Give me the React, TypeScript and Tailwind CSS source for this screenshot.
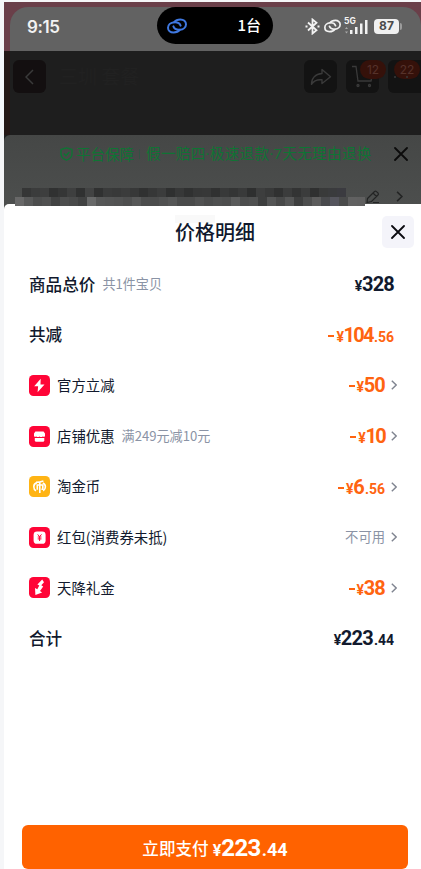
import { ReactNode } from "react"
import clsx from "clsx"

interface IPrice {
    value: string
    cents?: string
    minus?: boolean
}

interface IRow {
    label: string
    icon?: ReactNode
    note?: string
    price?: IPrice
    status?: string
    isLink?: boolean
}

const mosaicTop = [
    "#353636", "#3b3c3c", "#3d3e3e", "#303131", "#353636", "#3e3f3f", "#303131", "#424343", "#303131",
    "#3a3b3b", "#383939", "#3b3c3c", "#373838", "#303131", "#363737", "#3b3c3c", "#2f3030", "#373838",
    "#303131", "#363737", "#373838", "#303131", "#383939", "#343535", "#393a3a", "#2e2f2f", "#3d3e3e",
    "#383939", "#303131", "#3b3c3c", "#333434", "#3b3c3c", "#2f3030", "#393a3a", "#3a3b3d", "#3b3b40",
]
const mosaicBottom = [
    "#686868", "#585959", "#4c4d4d", "#505151", "#414242", "#4d4e4e", "#494a4a", "#414242", "#686969",
    "#565757", "#545555", "#525353", "#4e4f4f", "#575858", "#4c4d4d", "#4b4c4c", "#505151", "#555656",
    "#4a4b4b", "#4a4b4b", "#515252", "#4b4c4c", "#4f5050", "#4d4e4e", "#5a5b5b", "#4c4d4d", "#4f5050",
    "#3d3e3e", "#545555", "#484949", "#555656", "#3e3f3f", "#4d4e4e", "#5c5c5c", "#494a4d", "#55555d",
    "#4a4b4b", "#616161", "#606060",
]

const Mosaic = ({ colors, className }: { colors: string[]; className: string }) => (
    <div className={clsx("flex h-[9px] overflow-hidden", className)}>
        {colors.map((color, i) => (
            <div key={i} className="h-full w-[9px] shrink-0" style={{ backgroundColor: color }} />
        ))}
    </div>
)

const ChainIcon = ({ className }: { className: string }) => (
    <svg viewBox="0 0 20 16" fill="none" stroke="currentColor" strokeWidth="2" strokeLinecap="round" className={className}>
        <path d="M13.6 7.6C12.8 5.2 10.2 4 7.2 4.2 3.6 4.5 1 6.9 1 9.8c0 2.8 2.3 4.8 5.6 4.8 2.7 0 5-1.1 6.3-2.9" />
        <path d="M6.4 8.4C7.2 10.8 9.8 12 12.8 11.8 16.4 11.5 19 9.1 19 6.2c0-2.8-2.3-4.8-5.6-4.8-2.7 0-5 1.1-6.3 2.9" />
    </svg>
)

const CloseIcon = ({ className }: { className: string }) => (
    <svg viewBox="0 0 14 14" fill="none" stroke="currentColor" strokeWidth="1.8" strokeLinecap="round" className={className}>
        <path d="M1 1l12 12M13 1L1 13" />
    </svg>
)

const Chevron = ({ className }: { className?: string }) => (
    <svg viewBox="0 0 6 10" fill="none" stroke="currentColor" strokeWidth="1.4" className={className}>
        <path d="M.8 .8L5.2 5 .8 9.2" />
    </svg>
)

const Badge = ({ yellow, children }: { yellow?: boolean; children: ReactNode }) => (
    <svg viewBox="0 0 21 21" className="mr-[7px] h-[21px] w-[21px] shrink-0">
        <rect width="21" height="21" rx="4.5" fill={yellow ? "#ffb414" : "#ff0537"} />
        {children}
    </svg>
)

const BoltBadge = () => (
    <Badge>
        <path d="M11.7 3.8L5.2 11.3H9.1L8.6 17.2 15.5 9.4H11.5Z" fill="#fff" />
    </Badge>
)

const ShopBadge = () => (
    <Badge>
        <path d="M6.4 5.5H14.5L16 7.5V10.2Q15 11.3 13.7 10.5 12.1 11.5 10.5 10.5 8.9 11.5 7.3 10.5 6 11.3 5 10.2V7.5Z" fill="#fff" />
        <path d="M5.8 12.1H15.3V14.3Q15.3 15.8 13.8 15.8H7.3Q5.8 15.8 5.8 14.3Z" fill="#fff" />
    </Badge>
)

const CoinBadge = () => (
    <Badge yellow>
        <g fill="none" stroke="#fff" strokeWidth="1.6">
            <path d="M7 6.2Q11 6.2 14.4 4.9M10.8 6V17M8.3 13.8V9H13.8V13.2H12.4" />
            <path d="M8 6.6Q4.8 7.4 4.8 10.7 4.8 13.6 7 14.8M13.8 6.9Q16.4 8 16.4 10.8 16.400 13.4 14.2 14.7" />
        </g>
    </Badge>
)

const PacketBadge = () => (
    <Badge>
        <rect x="4.6" y="4.4" width="12" height="12.4" rx="3.4" fill="#fff" />
        <path d="M8.7 7.4L10.6 9.7 12.5 7.4M10.6 9.7V14M8.7 10H12.5M8.7 11.9H12.5" fill="none" stroke="#ff0537" strokeWidth="1" />
    </Badge>
)

const GiftBadge = () => (
    <Badge>
        <path d="M13.2 2.6L8.4 7.4 10.3 8.4 8.3 12.3 6 11 6.4 18 13.1 15.4 11 14.1 14.2 9.4 12.3 8.3 15 5.2Z" fill="#fff" />
    </Badge>
)

const rows: IRow[] = [
    { label: "商品总价", note: "共1件宝贝", price: { value: "328" } },
    { label: "共减", price: { value: "104", cents: ".56", minus: true } },
    { label: "官方立减", icon: <BoltBadge />, price: { value: "50", minus: true }, isLink: true },
    { label: "店铺优惠", icon: <ShopBadge />, note: "满249元减10元", price: { value: "10", minus: true }, isLink: true },
    { label: "淘金币", icon: <CoinBadge />, price: { value: "6", cents: ".56", minus: true }, isLink: true },
    { label: "红包(消费券未抵)", icon: <PacketBadge />, status: "不可用", isLink: true },
    { label: "天降礼金", icon: <GiftBadge />, price: { value: "38", minus: true }, isLink: true },
    { label: "合计", price: { value: "223", cents: ".44" } },
]

const Price = ({ value, cents, minus }: IPrice) => (
    <div className={clsx("flex items-baseline font-[Roboto,sans-serif] font-bold leading-none", minus ? "text-[#ff6410]" : "text-[#11192d]")}>
        {minus && <span className="mr-[2px] h-[2px] w-[6px] -translate-y-[5px] bg-[#ff6410]" />}
        <span className="text-[14px] tracking-[-0.4px]">¥</span>
        <span className={clsx("text-[20px]", value.includes("1") ? "tracking-[-1.7px]" : "tracking-[-0.8px]")}>{value}</span>
        {cents && <span className="ml-[1px] text-[14px]">{cents}</span>}
    </div>
)

const Row = ({ label, icon, note, price, status, isLink }: IRow) => (
    <div className="flex h-[50.6px] items-center">
        {icon}
        <span className={clsx("text-[#11192d]", icon ? "-mt-[1px] text-[14.4px]" : "text-[16.6px] font-medium")}>{label}</span>
        {note && <span className="ml-[7px] text-[13.1px] text-[#8a93a5]">{note}</span>}
        <div className="ml-auto flex items-center">
            {price && <Price {...price} />}
            {status && <span className="text-[13.3px] text-[#8a93a5]">{status}</span>}
            {isLink && <Chevron className="ml-[6px] -mr-[3px] h-[10px] w-[6px] text-[#7f8490]" />}
        </div>
    </div>
)

const StatusBar = () => (
    <div className="h-[49px] bg-[#6a3f49] pl-[6px] pt-[5px]">
        <div className="flex h-[44px] items-start rounded-t-[18px] bg-[#626262] text-[#f2f2f2]">
            <span className="ml-[17px] mt-[8px] w-[130px] font-[Inter,sans-serif] text-[17px] font-semibold leading-[24px] tracking-[-0.4px]">9:15</span>
            <div className="flex h-[37px] w-[116px] items-center justify-between rounded-full bg-black pl-[10px] pr-[12px]">
                <ChainIcon className="h-[16px] w-[20px] text-[#3f78e0]" />
                <span className="text-[15px] font-medium text-white">1台</span>
            </div>
            <div className="ml-[32px] mt-[10px] flex h-[18px] items-center">
                <svg viewBox="0 0 15 17" fill="none" stroke="currentColor" strokeWidth="1.8" className="h-[17px] w-[15px]">
                    <path d="M3 4.5L11.5 12.3 7.5 15.5V1.5L11.5 4.7 3 12.5" />
                    <path d="M.5 8.5H2.5M12.5 8.5H14.5" strokeWidth="2" />
                </svg>
                <ChainIcon className="ml-[4px] h-[14px] w-[17px]" />
                <div className="relative ml-[3px] h-[18px] w-[24px]">
                    <span className="absolute left-0 top-0 font-[Inter,sans-serif] text-[8.5px] font-bold leading-[8px]">5G</span>
                    <svg viewBox="0 0 24 18" className="h-full w-full" fill="currentColor">
                        <path d="M6 13h2.5v4H6zM11 10h2.5v7H11zM16 6.5h2.5V17H16zM21 3h2.5v14H21z" />
                        <path d="M1 12L2.5 10 4 12ZM1 14.5L2.5 16.5 4 14.5Z" opacity=".5" />
                    </svg>
                </div>
                <div className="ml-[6px] flex h-[15px] w-[25px] items-center justify-center rounded-[4px] bg-[#f0f0f0] font-[Inter,sans-serif] text-[12px] font-bold text-[#4b4b4b]">87</div>
                <div className="ml-[1px] h-[7px] w-[2px] rounded-r-full bg-[#9c9c9c]" />
            </div>
        </div>
    </div>
)

const DimmedHeader = () => (
    <div className="flex h-[84px] border-l-[6px] border-[#241715] bg-[#1e1e1e] pt-[9px] text-[#3a3a3a]">
        <div className="ml-[3px] flex h-[33px] w-[33px] items-center justify-center rounded-[6px] bg-[#130f10]">
            <svg viewBox="0 0 9 16" fill="none" stroke="currentColor" strokeWidth="1.5" className="h-[16px] w-[9px]">
                <path d="M8 1L1 8l7 7" />
            </svg>
        </div>
        <span className="ml-[13px] mt-[4px] text-[19px] leading-[24px] text-[#212121]">三圳 套餐</span>
        <div className="ml-auto flex gap-[9px] overflow-hidden">
            <div className="flex h-[33px] w-[33px] items-center justify-center rounded-[6px] bg-[#131313]">
                <svg viewBox="0 0 22 18" fill="none" stroke="currentColor" strokeWidth="1.4" strokeLinejoin="round" className="h-[18px] w-[22px]">
                    <path d="M12 1.5L20.5 8.8 12 15.5V11.8C7.5 11.3 4 12.3 1.5 16.3 1.5 10 5.5 6 12 5.5Z" />
                </svg>
            </div>
            <div className="relative h-[33px] w-[33px] rounded-[6px] bg-[#131313]">
                <svg viewBox="0 0 33 33" fill="none" stroke="currentColor" strokeWidth="1.3" className="h-full w-full">
                    <path d="M6 6.5H10L12 21H25L27 11" />
                    <circle cx="12" cy="25.5" r="1" />
                    <circle cx="23.5" cy="25.5" r="1" />
                </svg>
                <span className="absolute left-[14px] top-0 flex h-[19px] w-[26px] items-center justify-center rounded-full bg-[#35110a] font-[Inter,sans-serif] text-[12px] text-[#56322a]">12</span>
            </div>
            <div className="relative h-[33px] w-[33px] rounded-l-[6px] bg-[#131313]">
                <span className="absolute left-[6px] top-0 flex h-[19px] w-[26px] items-center justify-center rounded-full bg-[#35110a] font-[Inter,sans-serif] text-[12px] text-[#56322a]">22</span>
                <span className="absolute left-[6px] top-[16px] h-[2px] w-[2px] rounded-full bg-[#3a3a3a]" />
                <span className="absolute left-[18px] top-[16px] h-[2px] w-[2px] rounded-full bg-[#3a3a3a]" />
            </div>
        </div>
    </div>
)

const GuaranteePanel = () => (
    <div className="bg-[#1e1e1e]">
        <div className="h-[69px] rounded-tl-[6px] bg-linear-to-b from-[#454746] to-[#4c4e4d] text-[14.5px] text-[#0f7434]">
            <div className="flex h-[37px] items-center pl-[56px]">
                <svg viewBox="0 0 13 14" fill="none" stroke="currentColor" strokeWidth="1.4" strokeLinejoin="round" className="h-[14px] w-[13px]">
                    <path d="M6.5 .8L12 2.5V7C12 10 9.5 12 6.5 13.2 3.5 12 1 10 1 7V2.5Z" />
                    <path d="M3.8 6.5L6 8.7 9.3 5" />
                </svg>
                <span className="ml-[3px]">平台保障</span>
                <span className="ml-[5px] h-[10px] w-px bg-[#345044]" />
                <span className="ml-[6px] whitespace-nowrap font-['Open_Sans','Noto_Sans_CJK_SC',sans-serif] tracking-[0.4px]">假一赔四·极速退款·7天无理由退换</span>
                <CloseIcon className="ml-auto mr-[13px] h-[14px] w-[14px] text-[#0b0b0b]" />
            </div>
            <div className="flex h-[34px]">
                <div className="relative z-10 w-[361px] pt-[16px]">
                    <Mosaic colors={mosaicTop} className="ml-[18px] w-[325px]" />
                    <Mosaic colors={mosaicBottom} className="ml-[11px] w-[350px]" />
                </div>
                <div className="flex items-start pt-[18px] text-[#232424]">
                    <svg viewBox="0 0 14 14" fill="none" stroke="currentColor" strokeWidth="1.2" className="ml-[1px] h-[14px] w-[14px]">
                        <path d="M1.5 8.5L8.5 1.5Q9.5 .7 10.5 1.6L12 3Q12.8 4 12 5L5.5 11.5 1 12.5ZM7 3L10.5 6.5M7 12.5H13" />
                    </svg>
                    <Chevron className="ml-[16px] mt-[1px] h-[11px] w-[7px]" />
                </div>
            </div>
        </div>
    </div>
)

const App = () => {
    return (
        <div className="h-[869px] w-[421px] overflow-hidden bg-[#f5f6f8] pl-[4px] pt-[2px] font-['Noto_Sans_CJK_SC',sans-serif]">
            <StatusBar />
            <DimmedHeader />
            <GuaranteePanel />
            <div className="bg-[#4c4e4d]">
                <div className="relative flex h-[665px] flex-col rounded-tl-[5px] bg-white">
                    <div className="relative h-[55px]">
                        <div className="absolute left-[171px] top-[11px] h-[8px] w-[40px] bg-[#f9f9f9]" />
                        <h1 className="relative pl-[5px] pt-[13px] text-center text-[20px] font-medium leading-[30px] text-[#11192d]">价格明细</h1>
                        <button className="absolute right-[7px] top-[12px] flex h-[32px] w-[32px] items-center justify-center rounded-[5px] bg-[#f4f4fa]">
                            <CloseIcon className="h-[14px] w-[14px] text-[#0b0b10]" />
                        </button>
                    </div>
                    <div className="pl-[25px] pr-[27px]">
                        {rows.map(row => (
                            <Row key={row.label} {...row} />
                        ))}
                    </div>
                    <button className="ml-[18px] mr-[13px] mt-auto flex h-[44px] items-center justify-center rounded-[6px] bg-[#ff6200] pt-[2px] text-white">
                        <span className="text-[16.6px] font-medium">立即支付</span>
                        <span className="ml-[4px] flex items-baseline font-[Roboto,sans-serif] font-bold leading-none">
                            <span className="text-[16px]">¥</span>
                            <span className="text-[24px] tracking-[-0.6px]">223</span>
                            <span className="ml-[1px] text-[18px]">.44</span>
                        </span>
                    </button>
                </div>
            </div>
        </div>
    )
}

export default App
